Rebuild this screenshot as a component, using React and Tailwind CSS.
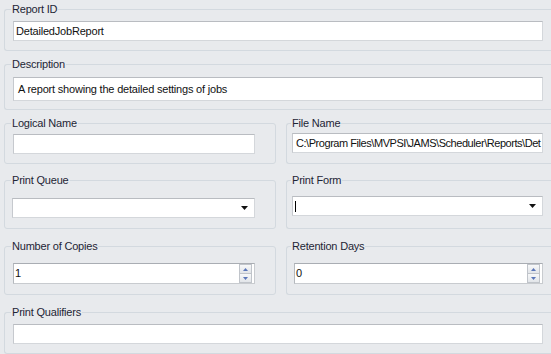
import React from "react";

const font = { fontFamily: '"Liberation Sans", Arial, sans-serif' };

function Group({ label, className, children }) {
  return (
    <fieldset
      className={`min-w-0 border border-[#d3d9df] ${className}`}
    >
      <legend className="px-[1px] text-[11px] leading-[13px] tracking-[-0.2px] text-[#1e2535]">
        {label}
      </legend>
      {children}
    </fieldset>
  );
}

function TextBox({ value, className }) {
  return (
    <div
      className={`h-[20px] bg-white border border-[#d4d7db] border-t-[#b9bcc1] border-l-[#c6c9ce] flex items-center overflow-hidden whitespace-nowrap text-[11px] text-[#111] ${className}`}
    >
      {value}
    </div>
  );
}

function ComboBox({ className, caret }) {
  return (
    <div
      className={`h-[20px] bg-white border border-[#d4d7db] border-t-[#b9bcc1] border-l-[#c6c9ce] flex items-center justify-between ${className}`}
    >
      <div className="pl-[2px] flex items-center">
        {caret && <div className="w-[1px] h-[11px] bg-black" />}
      </div>
      <svg width="7" height="4" viewBox="0 0 7 4" className="mr-[6px]">
        <path d="M0 0H7L3.5 4Z" fill="#111" />
      </svg>
    </div>
  );
}

function SpinBox({ value, className }) {
  return (
    <div
      className={`h-[21px] bg-white border border-[#c8cbcf] border-t-[#a9adb3] border-l-[#b5b9be] flex items-center justify-between text-[11px] text-[#111] ${className}`}
    >
      <span className="pl-[1px]">{value}</span>
      <div className="mr-[2px] flex flex-col gap-[1px] border border-[#c0c4ca] bg-[#c0c4ca]">
        <div className="w-[11px] h-[8px] bg-gradient-to-b from-[#f7f8f9] to-[#e2e5e9] flex items-center justify-center">
          <svg width="5" height="3" viewBox="0 0 5 3">
            <path d="M0 3H5L2.5 0Z" fill="#5b77b9" />
          </svg>
        </div>
        <div className="w-[11px] h-[8px] bg-gradient-to-b from-[#f7f8f9] to-[#e2e5e9] flex items-center justify-center">
          <svg width="5" height="3" viewBox="0 0 5 3">
            <path d="M0 0H5L2.5 3Z" fill="#5b77b9" />
          </svg>
        </div>
      </div>
    </div>
  );
}

export default function App() {
  return (
    <div
      className="w-[551px] h-[354px] bg-[#e8eaed] overflow-hidden pt-[3px] pl-[4px] flex flex-col"
      style={font}
    >
      <Group label="Report ID" className="rounded-l-[3px] border-r-0 pl-[6px] pt-[5px] pb-[9px]">
        <TextBox value="DetailedJobReport" className="ml-[2px] w-[530px] pl-[2px] tracking-[-0.2px]" />
      </Group>

      <Group label="Description" className="mt-[7px] rounded-l-[3px] border-r-0 pl-[6px] pt-[6px] pb-[8px]">
        <TextBox
          value="A report showing the detailed settings of jobs"
          className="ml-[2px] w-[530px] !h-[24px] pl-[4px] tracking-[-0.2px]"
        />
      </Group>

      <div className="mt-[7px] flex gap-[10px]">
        <Group label="Logical Name" className="w-[272px] rounded-[3px] pl-[6px] pt-[4px] pb-[9px]">
          <TextBox value="" className="ml-[2px] w-[242px]" />
        </Group>
        <Group label="File Name" className="flex-1 rounded-l-[3px] border-r-0 pl-[4px] pt-[3px] pb-[10px]">
          <TextBox
            value="C:\Program Files\MVPSI\JAMS\Scheduler\Reports\Det"
            className="ml-[1px] w-[251px] pl-[3px] tracking-[-0.45px]"
          />
        </Group>
      </div>

      <div className="mt-[10px] flex gap-[10px]">
        <Group label="Print Queue" className="w-[272px] rounded-[3px] pl-[6px] pt-[11px] pb-[10px]">
          <ComboBox className="ml-[1px] w-[243px]" />
        </Group>
        <Group label="Print Form" className="flex-1 rounded-l-[3px] border-r-0 pl-[4px] pt-[9px] pb-[12px]">
          <ComboBox className="ml-[1px] w-[251px]" caret />
        </Group>
      </div>

      <div className="mt-[11px] flex gap-[10px]">
        <Group label="Number of Copies" className="w-[272px] rounded-[3px] pl-[6px] pt-[10px] pb-[9px]">
          <SpinBox value="1" className="ml-[2px] w-[242px]" />
        </Group>
        <Group label="Retention Days" className="flex-1 rounded-l-[3px] border-r-0 pl-[4px] pt-[10px] pb-[10px]">
          <SpinBox value="0" className="ml-[3px] w-[249px]" />
        </Group>
      </div>

      <Group label="Print Qualifiers" className="mt-[11px] rounded-l-[3px] border-r-0 pl-[6px] pt-[5px] pb-[9px]">
        <TextBox value="" className="ml-[2px] w-[530px]" />
      </Group>
    </div>
  );
}
